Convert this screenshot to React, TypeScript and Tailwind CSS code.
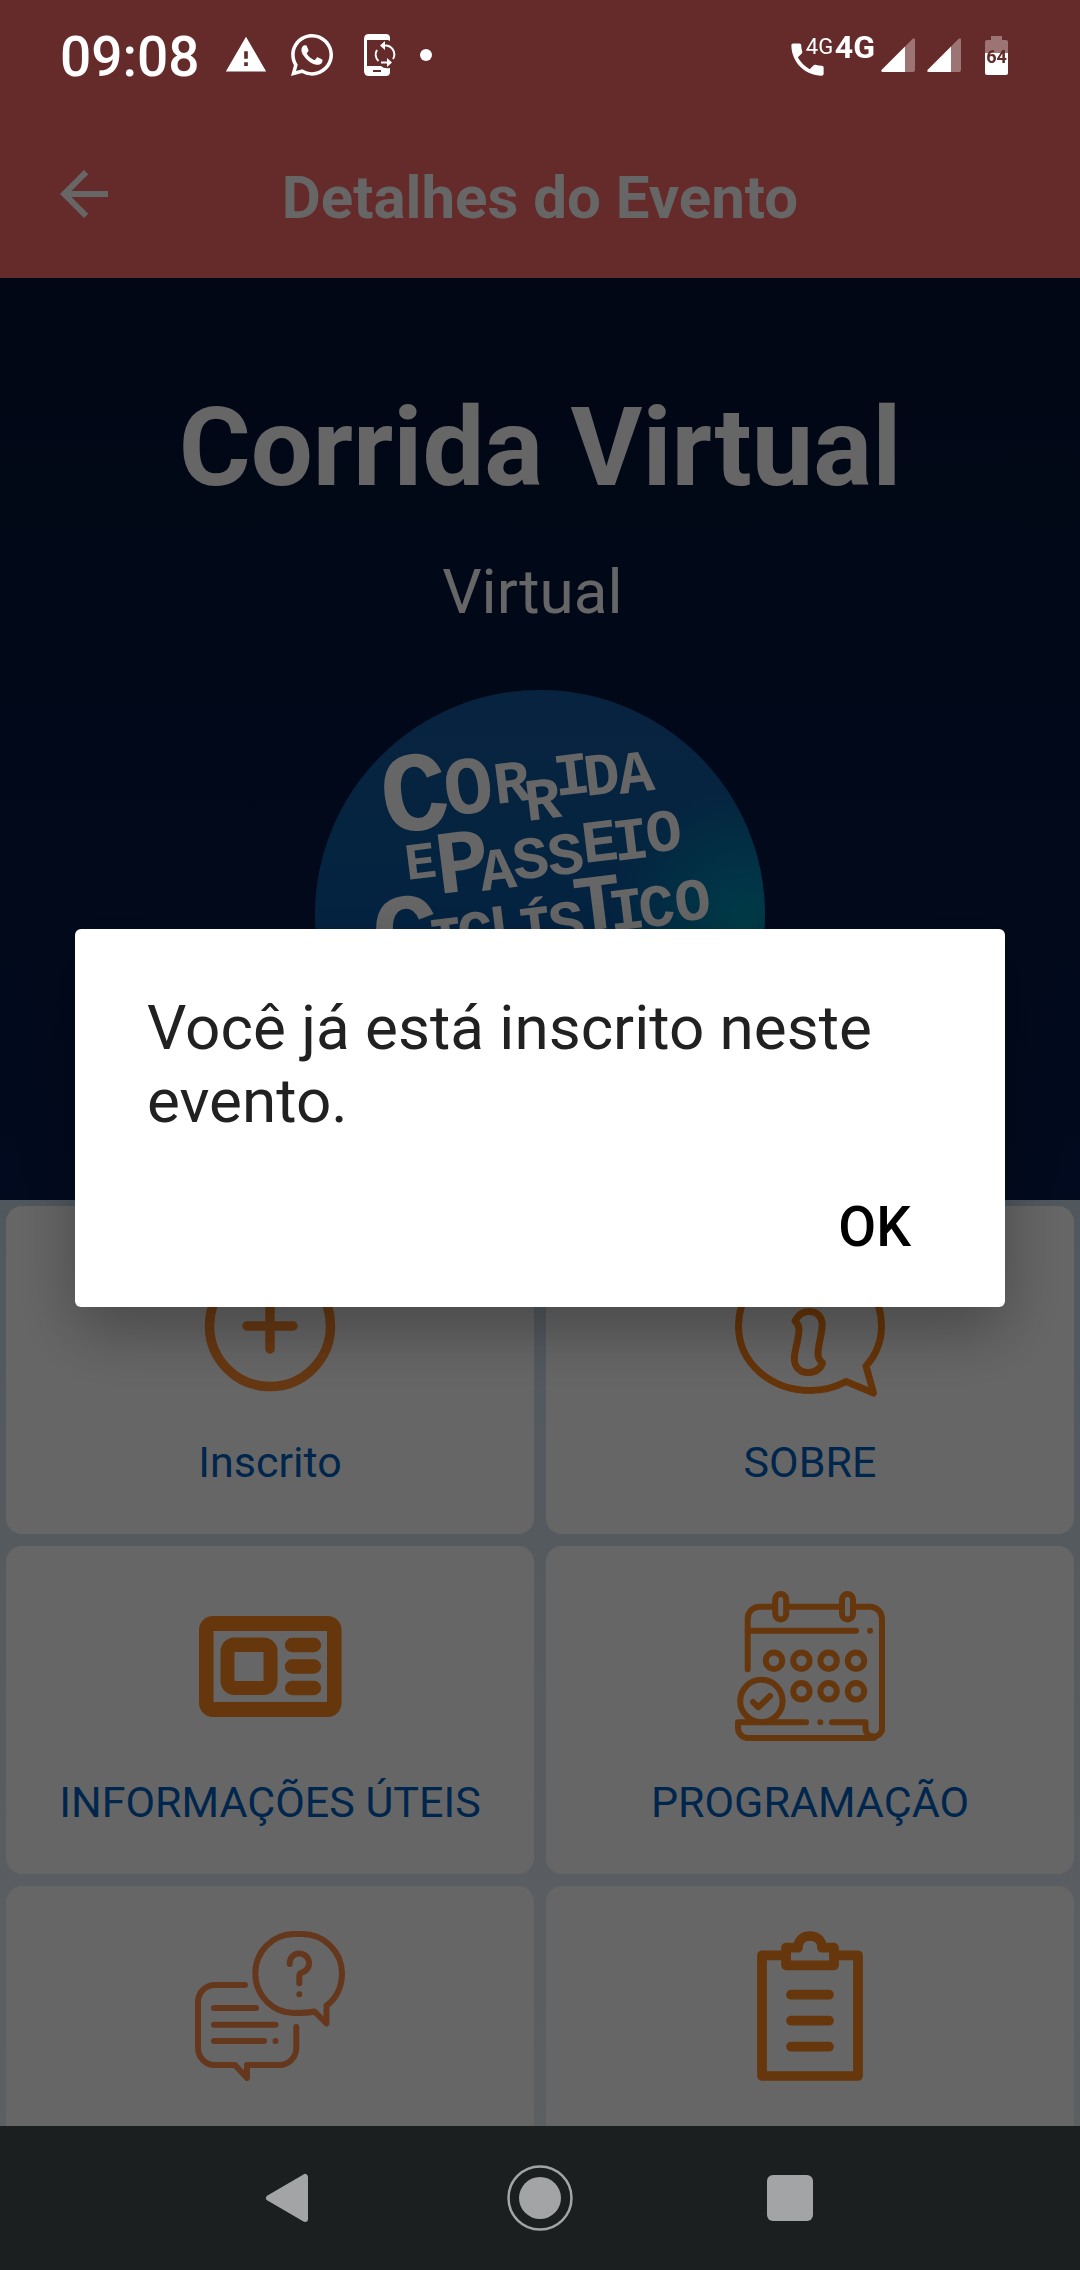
import React, { useState } from 'react';
import { FaWhatsapp } from 'react-icons/fa';
import { MdArrowBack, MdPhone, MdWarning } from 'react-icons/md';

interface IconProps {
  className?: string;
}

interface LetterRun {
  text: string;
  size: number;
  x: string;
  y: string;
}

// Hand-set lettering of the event badge, one row per line
const BADGE_LINES: LetterRun[][] = [
  [
    { text: 'C', size: 114, x: '70', y: '144' },
    { text: 'O', size: 82, x: '132', y: '126' },
    { text: 'RRIDA', size: 60, x: '181 212 241 271 305', y: '114 131 106 106 104' },
  ],
  [
    { text: 'E', size: 52, x: '92', y: '190' },
    { text: 'P', size: 90, x: '124', y: '204' },
    { text: 'ASSEIO', size: 60, x: '167 200 235 269 300 333', y: '201 190 186 173 171 163' },
  ],
  [
    { text: 'C', size: 114, x: '62', y: '286' },
    { text: 'ICLÍS', size: 60, x: '116 145 176 205 236', y: '270 264 257 259 254' },
    { text: 'T', size: 80, x: '262', y: '242' },
    { text: 'ICO', size: 60, x: '296 326 362', y: '241 238 232' },
  ],
];

const EventBadge: React.FC<IconProps> = ({ className }) => (
  <svg viewBox="0 0 450 450" className={className}>
    <defs>
      <linearGradient id="sky" x1="0" y1="0" x2="0" y2="1">
        <stop offset="0" stopColor="#16599f" />
        <stop offset="0.35" stopColor="#0c5aa0" />
        <stop offset="0.6" stopColor="#0657a8" />
        <stop offset="1" stopColor="#0a7fc0" />
      </linearGradient>
      <radialGradient id="glow" cx="0.95" cy="0.52" r="0.3">
        <stop offset="0" stopColor="#0096b4" />
        <stop offset="1" stopColor="#0096b4" stopOpacity="0" />
      </radialGradient>
    </defs>
    <circle cx="225" cy="225" r="225" fill="url(#sky)" />
    <circle cx="225" cy="225" r="225" fill="url(#glow)" />
    {BADGE_LINES.map((runs, i) => (
      <text key={i} fill="#fff" rotate="-7" className="font-['Liberation_Mono',monospace] font-bold">
        {runs.map((run) => (
          <tspan key={run.x} x={run.x} y={run.y} fontSize={run.size}>
            {run.text}
          </tspan>
        ))}
      </text>
    ))}
  </svg>
);

const PlusIcon: React.FC<IconProps> = ({ className }) => (
  <svg viewBox="0 0 150 150" fill="none" stroke="currentColor" strokeWidth="9.5" strokeLinecap="round" className={className}>
    <circle cx="75" cy="75" r="60.5" />
    <path d="M52 75h46M75 52v46" />
  </svg>
);

const AboutIcon: React.FC<IconProps> = ({ className }) => (
  <svg viewBox="0 0 150 150" fill="none" stroke="currentColor" strokeWidth="7" strokeLinejoin="round" strokeLinecap="round" className={className}>
    <path d="M131 115C141 104 146.500 90 146.500 75C146.500 38 115 9.500 75 9.500S3.500 38 3.500 75S36 139.500 75 139.500C88 139.500 100 136.500 111 130.500L138.500 142Z" />
    <path d="M60 70C64 62 70 60.500 74 60.500C84 60.500 88 68 87 77C86 86 83 95 83 103C83 108 85 110 87.500 112C85 119 79 121.500 73 121.500C63 121.500 58.500 114 59.500 105C60.500 96 64 87 64 78C64 74 62 72 60 70Z" />
    <circle cx="77" cy="38" r="11" />
  </svg>
);

const NewsIcon: React.FC<IconProps> = ({ className }) => (
  <svg viewBox="0 0 150 150" fill="none" stroke="currentColor" strokeWidth="14.300" strokeLinecap="round" className={className}>
    <path fill="currentColor" stroke="none" fillRule="evenodd" d="M18 25H132.500A14 14 0 0 1 146.500 39V112A14 14 0 0 1 132.500 126H18A14 14 0 0 1 4 112V39A14 14 0 0 1 18 25ZM18.500 40V111H132V40Z" />
    <path fill="currentColor" stroke="none" fillRule="evenodd" d="M39.500 46.500H68.500A14 14 0 0 1 82.500 60.500V90A14 14 0 0 1 68.500 104H39.500A14 14 0 0 1 25.500 90V60.500A14 14 0 0 1 39.500 46.500ZM39.500 61V90H68.500V61Z" />
    <path d="M97 54h22M97 75.500h22M97 97h22" />
  </svg>
);

const ScheduleIcon: React.FC<IconProps> = ({ className }) => (
  <svg viewBox="0 0 150 150" fill="none" stroke="currentColor" strokeWidth="6" strokeLinecap="round" strokeLinejoin="round" className={className}>
    <path d="M12.700 78.300V28A12 12 0 0 1 25 15.700H40M51.500 15.700H107M118 15.700H135A12 12 0 0 1 147 28V139A8.500 8.500 0 0 1 130.500 139V131.300H97" />
    <rect x="40.200" y="3" width="11" height="25.500" rx="5.500" />
    <rect x="107" y="3" width="11" height="25.500" rx="5.500" />
    <path d="M12.700 39.700H121M135 39.700h.01M85.300 131.300h.01" />
    {[39, 66.4, 93.6, 121].map((cx) => (
      <circle key={cx} cx={cx} cy="69.700" r="8.200" />
    ))}
    {[66.4, 93.6, 121].map((cx) => (
      <circle key={cx} cx={cx} cy="100.300" r="8.200" />
    ))}
    <circle cx="26.400" cy="110" r="21.200" />
    <path d="M18 111L23.300 116.300L35 105" />
    <path d="M71 131.300H3V137A10 10 0 0 0 13 147H139" />
  </svg>
);

const QuestionsIcon: React.FC<IconProps> = ({ className }) => (
  <svg viewBox="0 0 150 150" fill="none" stroke="currentColor" strokeWidth="6" strokeLinecap="round" strokeLinejoin="round" className={className}>
    <path d="M131.500 74.500C141 68 147 56 147 42.500A40 39.500 0 0 0 107 3H99A39 39.500 0 0 0 60.300 42.500A39 39.500 0 0 0 99 82C106 82 113 82 119.500 80.500L131.500 92.500Z" />
    <path d="M94.700 33A9.700 9.700 0 1 1 107 41.500Q104.300 42.300 104.300 45V52.300M104.300 63.300h.01" />
    <path d="M50 54H20A17 17 0 0 0 3 71V117A17 17 0 0 0 20 134H40L52 147V134H84A17 17 0 0 0 101.300 117V96" />
    <path d="M19 77H61M19 93.700H80.500M19 110H69M80.500 110h.01" />
  </svg>
);

const ClipboardIcon: React.FC<IconProps> = ({ className }) => (
  <svg viewBox="0 0 150 150" fill="none" stroke="currentColor" strokeWidth="9.700" strokeLinecap="round" strokeLinejoin="round" className={className}>
    <path d="M51 24.300H27V145H123V24.300H99" />
    <path d="M51 34.300V16.700H63C63 9.500 68 5 75 5S87 9.500 87 16.700H99V34.300Z" />
    <path d="M56 63.700H94M56 89.700H94M56 115.700H94" />
  </svg>
);

const PhoneSyncIcon: React.FC<IconProps> = ({ className }) => (
  <svg viewBox="0 0 32 42" fill="none" className={className}>
    <path fill="currentColor" fillRule="evenodd" d="M5 0H22Q26 0 26 4V7L24 6H3V32H17Q20 35 26 34V38Q26 42 22 42H5Q0 42 0 37V5Q0 0 5 0ZM9 36V38H17V36Z" />
    <path stroke="currentColor" strokeWidth="2" d="M14.500 27A9 9 0 0 1 13 16M20 11.500A9 9 0 0 1 29 25M17 28.500H24" />
    <path fill="currentColor" d="M21 7V16L16 11.500ZM23 24V33L28 28.500Z" />
  </svg>
);

const SignalIcon: React.FC<IconProps> = ({ className }) => (
  <svg viewBox="0 0 34 34" fill="currentColor" className={className}>
    <path d="M24 8.500L31.500 1Q34 -1 34 2V32Q34 34 32 34H24Z" opacity="0.35" />
    <path d="M24 8.500V34H2Q-1 34 1 31.500Z" />
  </svg>
);

const BatteryIcon: React.FC<IconProps> = ({ className }) => (
  <svg viewBox="0 0 23 39" fill="currentColor" className={className}>
    <path d="M6 0H17V4H21Q23 4 23 6V17H0V6Q0 4 2 4H6Z" opacity="0.35" />
    <path d="M0 17H23V37Q23 39 21 39H2Q0 39 0 37Z" />
    <text x="11.500" y="27" fontSize="18" fontWeight="700" textAnchor="middle" fill="#652a2a">
      64
    </text>
  </svg>
);

const StatusBar: React.FC = () => (
  <div className="absolute inset-x-0 top-0 z-20 flex h-[110px] items-center justify-between pl-[60px] pr-[72px] text-white">
    <div className="flex items-center">
      <span className="mr-6 pt-1 text-[55px] leading-none font-medium">09:08</span>
      <MdWarning className="mr-5 size-11" />
      <FaWhatsapp className="mr-7 size-12" />
      <PhoneSyncIcon className="mr-6 h-[42px] w-8" />
      <span className="size-3 rounded-full bg-white" />
    </div>
    <div className="flex items-center">
      <div className="relative mr-1.5">
        <MdPhone className="mt-2 size-[43px]" />
        <span className="absolute top-1.5 left-5 text-[22px] leading-none">4G</span>
      </div>
      <span className="mr-1.5 pb-4 text-[32px] leading-none font-bold">4G</span>
      <SignalIcon className="mr-3 size-[34px]" />
      <SignalIcon className="mr-6 size-[34px]" />
      <BatteryIcon className="h-[39px] w-[23px]" />
    </div>
  </div>
);

const MENU_ITEMS = [
  { id: 'inscrito', name: 'Inscrito', label: 'Inscrito', Icon: PlusIcon, color: 'text-[#ff8c2e]' },
  { id: 'sobre', name: 'Sobre', label: 'SOBRE', Icon: AboutIcon, color: 'text-[#ff8318]' },
  { id: 'informacoes', name: 'Informações úteis', label: 'INFORMAÇÕES ÚTEIS', Icon: NewsIcon, color: 'text-[#ff871e]' },
  { id: 'programacao', name: 'Programação', label: 'PROGRAMAÇÃO', Icon: ScheduleIcon, color: 'text-[#ff871e]' },
  { id: 'duvidas', name: 'Dúvidas', label: '', Icon: QuestionsIcon, color: 'text-[#fc8b48]' },
  { id: 'regulamento', name: 'Regulamento', label: '', Icon: ClipboardIcon, color: 'text-[#ff871e]' },
];

const EventMenu: React.FC = () => (
  <div className="grid grid-cols-2 gap-3 bg-linear-to-b from-[#c8dcea] via-[#dbe5f0] to-[#e9f1f5] p-1.5">
    {MENU_ITEMS.map(({ id, name, label, Icon, color }) => (
      <button
        key={id}
        type="button"
        aria-label={name}
        className="flex h-[328px] flex-col items-center rounded-2xl bg-white pt-[45px]"
      >
        <Icon className={`size-[150px] ${color}`} />
        {label && <span className="mt-9 text-[43px] leading-[50px] text-[#005fc0]">{label}</span>}
      </button>
    ))}
  </div>
);

const NavigationBar: React.FC = () => (
  <nav className="relative z-20 flex h-36 shrink-0 items-center justify-center bg-[#1c1f20] text-[#a3a4a6]">
    <button type="button" aria-label="Voltar" className="flex w-[250px] justify-center">
      <svg viewBox="0 0 66 66" fill="currentColor" stroke="currentColor" strokeWidth="6" strokeLinejoin="round" className="size-[66px]">
        <path d="M12 33L48 12V54Z" />
      </svg>
    </button>
    <button type="button" aria-label="Início" className="flex w-[250px] justify-center">
      <svg viewBox="0 0 66 66" fill="none" className="size-[66px]">
        <circle cx="33" cy="33" r="31.500" stroke="currentColor" strokeWidth="2.500" />
        <circle cx="33" cy="33" r="21" fill="currentColor" />
      </svg>
    </button>
    <button type="button" aria-label="Recentes" className="flex w-[250px] justify-center">
      <span className="size-[46px] rounded-md bg-[#a3a4a6]" />
    </button>
  </nav>
);

const App: React.FC = () => {
  const [dialogOpen, setDialogOpen] = useState(true);

  return (
    <div className="relative flex h-screen flex-col overflow-hidden font-[Roboto,sans-serif]">
      <StatusBar />

      <header className="grid shrink-0 grid-cols-[72px_1fr_72px] items-center bg-[#fd6969] px-12 pt-[110px] text-white">
        <button type="button" aria-label="Voltar">
          <MdArrowBack className="size-[72px]" />
        </button>
        <h1 className="pt-2 text-center text-[60px] leading-[160px] font-bold">Detalhes do Evento</h1>
      </header>

      <main className="min-h-0 flex-1 overflow-y-auto [scrollbar-width:none]">
        <section className="flex flex-col items-center bg-linear-to-b from-[#041233] to-[#041a4c] pt-[104px] pb-[60px] text-white">
          <h2 className="text-[110px] leading-[132px] font-bold">Corrida Virtual</h2>
          <p className="mt-10 text-[62px] leading-[76px]">Virtual&nbsp;</p>
          <EventBadge className="mt-[60px] size-[450px]" />
        </section>
        <EventMenu />
      </main>

      <NavigationBar />

      {dialogOpen && (
        <div className="absolute inset-0 z-10 flex items-center bg-black/60 px-[75px] pt-[110px] pb-36">
          <div
            role="alertdialog"
            aria-describedby="dialog-message"
            className="flex w-full flex-col rounded-md bg-white pt-[62px] pb-12 shadow-[0_24px_64px_rgba(0,0,0,0.3)]"
          >
            <p id="dialog-message" className="px-[72px] text-[62px] leading-[73px] text-[#212121]">
              Você já está inscrito neste evento.
            </p>
            <button
              type="button"
              onClick={() => setDialogOpen(false)}
              className="mt-[58px] mr-[94px] self-end text-[55px] leading-[64px] font-medium text-black"
            >
              OK
            </button>
          </div>
        </div>
      )}
    </div>
  );
};

export default App;
